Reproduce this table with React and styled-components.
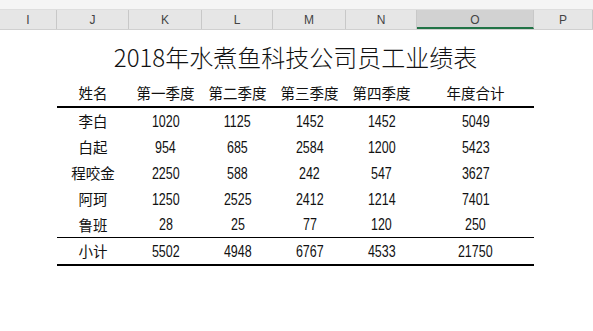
import React from 'react';
import styled, { createGlobalStyle } from 'styled-components';

const GlobalStyle = createGlobalStyle`
    html, body {
        margin: 0;
        padding: 0;
        background: #ffffff;
    }
    body {
        font-family: "Noto Sans CJK SC", "Liberation Sans", sans-serif;
        color: #000;
    }
`;

const COLS = [
    { key: 'I', width: 57 },
    { key: 'J', width: 72 },
    { key: 'K', width: 73 },
    { key: 'L', width: 71 },
    { key: 'M', width: 73 },
    { key: 'N', width: 71 },
    { key: 'O', width: 117, selected: true },
    { key: 'P', width: 59 },
];

const rows = [
    ['李白', 1020, 1125, 1452, 1452, 5049],
    ['白起', 954, 685, 2584, 1200, 5423],
    ['程咬金', 2250, 588, 242, 547, 3627],
    ['阿珂', 1250, 2525, 2412, 1214, 7401],
    ['鲁班', 28, 25, 77, 120, 250],
];

const total = ['小计', 5502, 4948, 6767, 4533, 21750];

const Sheet = styled.div`
    width: 593px;
    height: 331px;
    overflow: hidden;
    background: #fff;
`;

const TopStrip = styled.div`
    height: 9px;
    background: #f5f5f5;
    border-bottom: 1px solid #dedede;
`;

const ColHeader = styled.div`
    display: flex;
    height: 19px;
    background: #e6e6e6;
    border-bottom: 1px solid #d0d0d0;
`;

const ColCell = styled.div`
    flex: 0 0 ${(p) => p.$w}px;
    box-sizing: border-box;
    display: flex;
    align-items: center;
    justify-content: center;
    font-family: "Liberation Sans", Arial, sans-serif;
    font-size: 12px;
    color: #444;
    border-right: 1px solid #c8c8c8;
    background: ${(p) => (p.$sel ? '#d2d2d2' : 'transparent')};
    border-bottom: ${(p) => (p.$sel ? '2px solid #217346' : 'none')};
    padding-top: ${(p) => (p.$sel ? '2px' : '0')};
`;

const Body = styled.div`
    padding-left: 57px;
`;

const Report = styled.div`
    width: 477px;
`;

const Title = styled.div`
    padding-top: 12px;
    height: 30px;
    line-height: 30px;
    font-size: 24px;
    font-weight: 300;
    text-align: center;
    color: #111;
`;

const Row = styled.div`
    display: grid;
    grid-template-columns: 72px 73px 71px 73px 71px 117px;
    height: 26px;
    align-items: center;
    box-sizing: border-box;
    &.head {
        height: 36px;
        padding-top: 7px;
        border-bottom: 2px solid #000;
    }
    &.last {
        border-bottom: 1px solid #000;
    }
    &.total {
        border-bottom: 2px solid #000;
        height: 28px;
    }
`;

const Cell = styled.div`
    text-align: center;
    line-height: 20px;
    font-size: 14.5px;
    font-family: "Noto Sans CJK SC", sans-serif;
    color: #111;
    white-space: nowrap;
`;

const Num = styled.span`
    display: inline-block;
    font-family: "Liberation Sans", Arial, sans-serif;
    font-size: 16px;
    transform: scaleX(0.78);
`;

const DataRow = ({ data, className }) => (
    <Row className={className}>
        {data.map((v, i) => (
            <Cell key={i}>{i > 0 ? <Num>{v}</Num> : v}</Cell>
        ))}
    </Row>
);

const App = () => {
    return (
        <Sheet>
            <GlobalStyle />
            <TopStrip />
            <ColHeader>
                {COLS.map((c) => (
                    <ColCell key={c.key} $w={c.width} $sel={c.selected}>
                        {c.key}
                    </ColCell>
                ))}
            </ColHeader>
            <Body>
                <Report>
                    <Title>2018年水煮鱼科技公司员工业绩表</Title>
                    <Row className="head">
                        <Cell>姓名</Cell>
                        <Cell>第一季度</Cell>
                        <Cell>第二季度</Cell>
                        <Cell>第三季度</Cell>
                        <Cell>第四季度</Cell>
                        <Cell>年度合计</Cell>
                    </Row>
                    {rows.map((r, i) => (
                        <DataRow key={r[0]} data={r} className={i === rows.length - 1 ? 'last' : ''} />
                    ))}
                    <DataRow data={total} className="total" />
                </Report>
            </Body>
        </Sheet>
    );
};

export default App;
